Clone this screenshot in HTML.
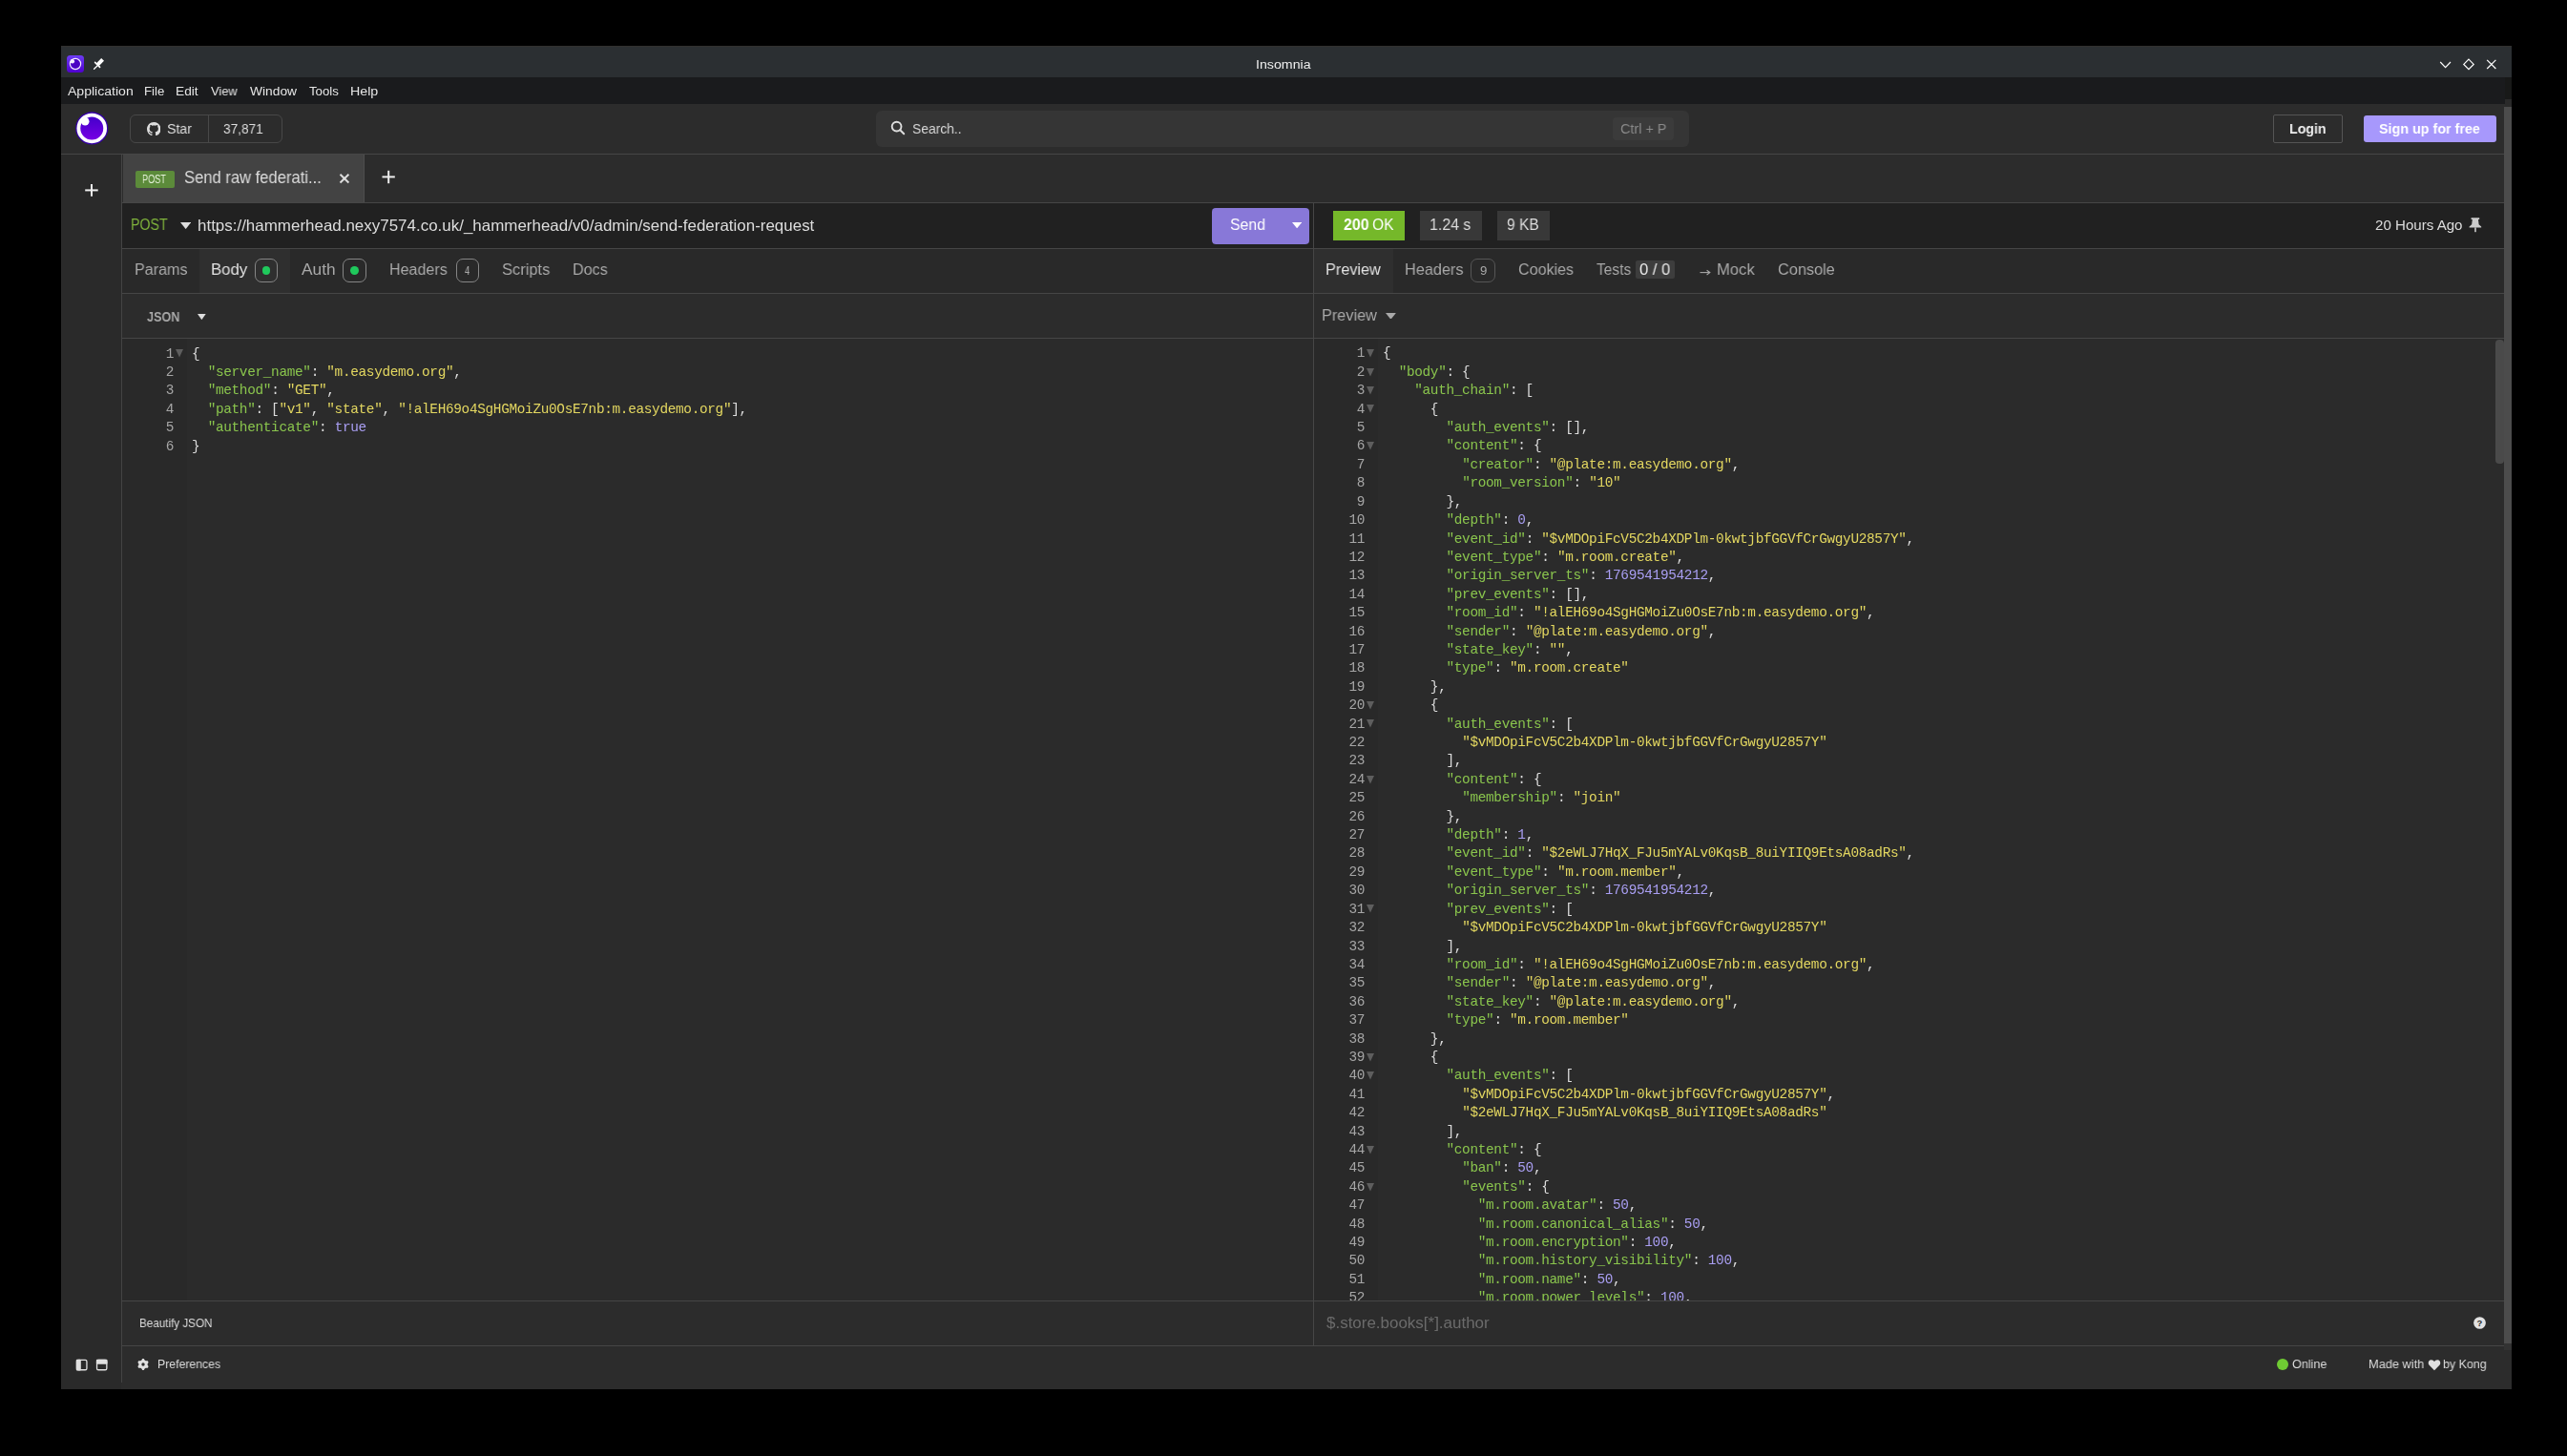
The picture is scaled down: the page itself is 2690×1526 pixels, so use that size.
<!DOCTYPE html><html><head><meta charset="utf-8"><style>html,body{margin:0;padding:0;background:#000;width:2690px;height:1526px;overflow:hidden;position:relative}.a{position:absolute}.t{white-space:pre;transform-origin:0 0;will-change:transform}.code{position:absolute;white-space:pre;font-family:"Liberation Mono",monospace;will-change:transform}.code i{font-style:normal}</style></head><body>
<div class="a" style="left:64px;top:48px;width:2568px;height:1408px;background:#2c2c2c;"></div>
<div class="a" style="left:64px;top:48px;width:2568px;height:33px;background:#2b2f32;"></div>
<div class="a" style="left:64px;top:48px;width:2568px;height:1px;background:#32302f;"></div>
<div class="a" style="left:64px;top:81px;width:2560.5px;height:28px;background:#1a1b1d;"></div>
<div class="a" style="left:2624.5px;top:81px;width:7.5px;height:23px;background:#181918;"></div>
<div class="a" style="left:2624.5px;top:104px;width:7.5px;height:8px;background:#2a2a2a;"></div>
<div class="a" style="left:2624px;top:112px;width:8px;height:1296px;background:#4c4c4c;"></div>
<div class="a" style="left:2624px;top:1408px;width:8px;height:7px;background:#333333;"></div>
<div class="a" style="left:64px;top:109px;width:2560px;height:52px;background:#2c2c2c;"></div>
<div class="a" style="left:64px;top:161px;width:2560px;height:1px;background:#464646;"></div>
<div class="a" style="left:64px;top:162px;width:63px;height:1294px;background:#2a2a2a;"></div>
<div class="a" style="left:127px;top:162px;width:1.5px;height:1287px;background:#444444;"></div>
<div class="a" style="left:128px;top:162px;width:2496px;height:50px;background:#2c2c2c;"></div>
<div class="a" style="left:129px;top:162px;width:252px;height:50px;background:#434343;"></div>
<div class="a" style="left:381px;top:162px;width:1px;height:50px;background:#4e4e4e;"></div>
<div class="a" style="left:128px;top:212px;width:2496px;height:1px;background:#464646;"></div>
<div class="a" style="left:128px;top:213px;width:2496px;height:47px;background:#212121;"></div>
<div class="a" style="left:128px;top:260px;width:2496px;height:1px;background:#464646;"></div>
<div class="a" style="left:128px;top:261px;width:2496px;height:46px;background:#292929;"></div>
<div class="a" style="left:209px;top:261px;width:94.7px;height:46px;background:#2f2f2f;"></div>
<div class="a" style="left:1377px;top:261px;width:83px;height:46px;background:#2f2f2f;"></div>
<div class="a" style="left:128px;top:307px;width:2496px;height:1px;background:#464646;"></div>
<div class="a" style="left:128px;top:308px;width:2496px;height:46px;background:#2c2c2c;"></div>
<div class="a" style="left:128px;top:354px;width:2496px;height:1px;background:#464646;"></div>
<div class="a" style="left:128px;top:355px;width:1248px;height:1008px;background:#2b2b2b;"></div>
<div class="a" style="left:128px;top:355px;width:67.6px;height:1008px;background:#292929;"></div>
<div class="a" style="left:1377px;top:355px;width:1247px;height:1008px;background:#2b2b2b;"></div>
<div class="a" style="left:1377px;top:355px;width:67.3px;height:1008px;background:#292929;"></div>
<div class="a" style="left:2615px;top:355.5px;width:8.7px;height:130.5px;background:#4a4a4a;border-radius:4px"></div>
<div class="a" style="left:128px;top:1363px;width:2496px;height:1px;background:#464646;"></div>
<div class="a" style="left:128px;top:1364px;width:2496px;height:46px;background:#2c2c2c;"></div>
<div class="a" style="left:128px;top:1410px;width:2496px;height:1px;background:#464646;"></div>
<div class="a" style="left:128px;top:1411px;width:2496px;height:45px;background:#2c2c2c;"></div>
<div class="a" style="left:1376px;top:213px;width:1px;height:1197px;background:#464646;"></div>
<div class="a" style="left:136px;top:120px;width:159.5px;height:30px;background:transparent;border:1px solid #484848;border-radius:6px;box-sizing:border-box"></div>
<div class="a" style="left:218px;top:120px;width:1px;height:30px;background:#484848;"></div>
<div class="a" style="left:918px;top:116px;width:852px;height:38px;background:#353535;border-radius:6px"></div>
<div class="a" style="left:1690px;top:122.8px;width:64px;height:23.9px;background:#3b3b3b;border-radius:4px"></div>
<div class="a" style="left:2382px;top:120px;width:72.6px;height:29.7px;background:transparent;border:1px solid #555;border-radius:2px;box-sizing:border-box"></div>
<div class="a" style="left:2477px;top:121px;width:139px;height:28.3px;background:#a798fc;border-radius:3px"></div>
<div class="a" style="left:141.7px;top:178.8px;width:41.4px;height:18.2px;background:#5c8b3a;border-radius:2px"></div>
<div class="a" style="left:1270px;top:217.8px;width:102px;height:38.2px;background:#8878d8;border-radius:4px"></div>
<div class="a" style="left:1396.8px;top:221px;width:75.2px;height:31px;background:#75b82a;"></div>
<div class="a" style="left:1488.1px;top:221px;width:64.7px;height:31px;background:#383838;"></div>
<div class="a" style="left:1569.1px;top:221px;width:54.6px;height:31px;background:#383838;"></div>
<div class="a" style="left:1714.2px;top:273.1px;width:40.5px;height:18.7px;background:#3d3d3d;border-radius:2px"></div>
<div class="a" style="left:267px;top:271.2px;width:23.8px;height:24.6px;background:transparent;border:1px solid #858585;border-radius:7px;box-sizing:border-box"></div>
<div class="a" style="left:358.9px;top:271.2px;width:24.8px;height:24.6px;background:transparent;border:1px solid #858585;border-radius:7px;box-sizing:border-box"></div>
<div class="a" style="left:478px;top:271.2px;width:24px;height:24.6px;background:transparent;border:1px solid #858585;border-radius:7px;box-sizing:border-box"></div>
<div class="a" style="left:1541.1px;top:271.2px;width:25.7px;height:24.6px;background:transparent;border:1px solid #565656;border-radius:7px;box-sizing:border-box"></div>
<div class="a" style="left:274.5px;top:279.20000000000005px;width:8.8px;height:8.8px;background:#1fc95c;border-radius:50%"></div>
<div class="a" style="left:366.9px;top:279.20000000000005px;width:8.8px;height:8.8px;background:#1fc95c;border-radius:50%"></div>
<svg class="a" style="left:70px;top:58px" width="18" height="18" viewBox="0 0 18 18"><defs><linearGradient id="g1" x1="0" y1="0" x2="0" y2="1"><stop offset="0" stop-color="#6d3cf5"/><stop offset="1" stop-color="#5000d0"/></linearGradient></defs><rect x="0" y="0" width="18" height="18" rx="3.5" fill="url(#g1)"/><circle cx="9" cy="9" r="5.6" fill="#4b00c4" stroke="#f4ecff" stroke-width="1.2"/><circle cx="5.8" cy="6.3" r="2.3" fill="#f4ecff"/></svg>
<svg class="a" style="left:96px;top:59px" width="15" height="15" viewBox="0 0 15 15"><polygon points="10.2,2.0 13.0,4.8 7.6,10.2 4.8,7.4" fill="#fff"/><line x1="3.6" y1="6.4" x2="8.6" y2="11.4" stroke="#fff" stroke-width="1.6" stroke-linecap="round"/><line x1="6" y1="10" x2="2.6" y2="13.2" stroke="#fff" stroke-width="1.3" stroke-linecap="round"/></svg>
<svg class="a" style="left:2554px;top:58px" width="70" height="20" viewBox="0 0 70 20"><polyline points="3.2,7 8.6,12.6 14,7" fill="none" stroke="#fff" stroke-width="1.2"/><polygon points="33,4.2 38.2,9.4 33,14.6 27.8,9.4" fill="none" stroke="#fff" stroke-width="1.2"/><line x1="52.2" y1="4.8" x2="61.4" y2="14" stroke="#fff" stroke-width="1.2"/><line x1="61.4" y1="4.8" x2="52.2" y2="14" stroke="#fff" stroke-width="1.2"/></svg>
<svg class="a" style="left:78.4px;top:116.2px" width="37" height="37" viewBox="0 0 37 37"><defs><linearGradient id="g2" x1="0" y1="0" x2="0" y2="1"><stop offset="0" stop-color="#4000c8"/><stop offset="1" stop-color="#7b00e6"/></linearGradient></defs><circle cx="18.25" cy="18.45" r="17.1" fill="#3600a8"/><circle cx="18.25" cy="18.45" r="13.9" fill="url(#g2)" stroke="#fff" stroke-width="3.8"/><circle cx="11.2" cy="11.2" r="4.3" fill="#fff"/></svg>
<svg class="a" style="left:153.5px;top:127.5px" width="14.5" height="14.5" viewBox="0 0 16 16"><path fill="#dddddd" d="M8 0C3.58 0 0 3.58 0 8c0 3.54 2.29 6.53 5.47 7.59.4.07.55-.17.55-.38 0-.19-.01-.82-.01-1.49-2.01.37-2.53-.49-2.69-.94-.09-.23-.48-.94-.82-1.13-.28-.15-.68-.52-.01-.53.63-.01 1.08.58 1.23.82.72 1.21 1.87.87 2.33.66.07-.52.28-.87.51-1.07-1.78-.2-3.64-.89-3.64-3.95 0-.87.31-1.59.82-2.15-.08-.2-.36-1.02.08-2.12 0 0 .67-.21 2.2.82.64-.18 1.32-.27 2-.27.68 0 1.36.09 2 .27 1.53-1.04 2.2-.82 2.2-.82.44 1.1.16 1.92.08 2.12.51.56.82 1.27.82 2.15 0 3.07-1.87 3.75-3.65 3.95.29.25.54.73.54 1.48 0 1.07-.01 1.93-.01 2.2 0 .21.15.46.55.38A8.013 8.013 0 0016 8c0-4.42-3.58-8-8-8z"/></svg>
<svg class="a" style="left:932px;top:125px" width="18" height="18" viewBox="0 0 18 18"><circle cx="7.6" cy="7.6" r="4.9" fill="none" stroke="#dddddd" stroke-width="1.9"/><line x1="11.2" y1="11.2" x2="15.2" y2="15.2" stroke="#dddddd" stroke-width="2" stroke-linecap="round"/></svg>
<svg class="a" style="left:87px;top:191px" width="18" height="18" viewBox="0 0 18 18"><line x1="9" y1="2" x2="9" y2="14.8" stroke="#eeeeee" stroke-width="2"/><line x1="2.2" y1="8.4" x2="15.7" y2="8.4" stroke="#eeeeee" stroke-width="2"/></svg>
<svg class="a" style="left:353px;top:180px" width="16" height="16" viewBox="0 0 16 16"><line x1="3.5" y1="2.7" x2="12.4" y2="11.5" stroke="#dddddd" stroke-width="2"/><line x1="12.4" y1="2.7" x2="3.5" y2="11.5" stroke="#dddddd" stroke-width="2"/></svg>
<svg class="a" style="left:398px;top:176px" width="18" height="18" viewBox="0 0 18 18"><line x1="9.2" y1="2.8" x2="9.2" y2="16.2" stroke="#eeeeee" stroke-width="2"/><line x1="2.5" y1="9.4" x2="15.8" y2="9.4" stroke="#eeeeee" stroke-width="2"/></svg>
<svg class="a" style="left:188.7px;top:232.8px" width="11.3" height="7.1" viewBox="0 0 11.3 7.1"><polygon points="0,0 11.3,0 5.65,7.1" fill="#dddddd"/></svg>
<svg class="a" style="left:207.1px;top:329px" width="8.7" height="6.2" viewBox="0 0 8.7 6.2"><polygon points="0,0 8.7,0 4.35,6.2" fill="#dddddd"/></svg>
<svg class="a" style="left:1353.7px;top:232.8px" width="10.3" height="6.3" viewBox="0 0 10.3 6.3"><polygon points="0,0 10.3,0 5.15,6.3" fill="#ffffff"/></svg>
<svg class="a" style="left:1451.8px;top:327.5px" width="10.9" height="6.8" viewBox="0 0 10.9 6.8"><polygon points="0,0 10.9,0 5.45,6.8" fill="#a9a9a9"/></svg>
<svg class="a" style="left:2586px;top:226px" width="16" height="19" viewBox="0 0 16 19"><path d="M3.6,2.2 H12.2 V4 H11 L11.6,9.2 L14.2,11.4 V12.6 H1.6 V11.4 L4.2,9.2 L4.8,4 H3.6 Z" fill="#cccccc"/><rect x="7.2" y="12.4" width="1.6" height="4.8" fill="#cccccc"/></svg>
<svg class="a" style="left:1780px;top:280px" width="14" height="10" viewBox="0 0 14 10"><line x1="1.5" y1="5.6" x2="11.5" y2="5.6" stroke="#a9a9a9" stroke-width="1.1"/><polyline points="8.6,3.2 11.8,5.6 8.6,8" fill="none" stroke="#a9a9a9" stroke-width="1.1"/></svg>
<svg class="a" style="left:2591px;top:1379px" width="15" height="15" viewBox="0 0 15 15"><circle cx="7.5" cy="7.5" r="6.35" fill="#e2e2e2"/><text x="7.5" y="11.3" text-anchor="middle" font-family="Liberation Sans" font-weight="700" font-size="9.5" fill="#2a2a2a">?</text></svg>
<svg class="a" style="left:78px;top:1423px" width="36" height="15" viewBox="0 0 36 15"><rect x="2.45" y="2.35" width="10.5" height="10.4" rx="1.6" fill="none" stroke="#e0e0e0" stroke-width="1.3"/><rect x="1.8" y="1.7" width="5" height="11.7" rx="1" fill="#e0e0e0"/><rect x="23.55" y="2.35" width="10.3" height="10.4" rx="1.6" fill="none" stroke="#e0e0e0" stroke-width="1.3"/><rect x="22.9" y="1.7" width="11.6" height="5" rx="1" fill="#e0e0e0"/></svg>
<svg class="a" style="left:143px;top:1423px" width="14" height="14" viewBox="0 0 14 14"><polygon points="7.00,1.00 7.78,1.05 8.37,1.88 8.76,2.75 9.30,3.02 9.80,3.35 10.75,3.25 11.76,3.35 12.20,4.00 12.54,4.70 12.12,5.63 11.56,6.40 11.60,7.00 11.56,7.60 12.12,8.37 12.54,9.30 12.20,10.00 11.76,10.65 10.75,10.75 9.80,10.65 9.30,10.98 8.76,11.25 8.37,12.12 7.78,12.95 7.00,13.00 6.22,12.95 5.63,12.12 5.24,11.25 4.70,10.98 4.20,10.65 3.25,10.75 2.24,10.65 1.80,10.00 1.46,9.30 1.88,8.37 2.44,7.60 2.40,7.00 2.44,6.40 1.88,5.63 1.46,4.70 1.80,4.00 2.24,3.35 3.25,3.25 4.20,3.35 4.70,3.02 5.24,2.75 5.63,1.88 6.22,1.05" fill="#e0e0e0"/><circle cx="7" cy="7" r="1.7" fill="#2c2c2c"/></svg>
<div class="a" style="left:2386.1px;top:1424.2px;width:11.9px;height:11.8px;background:#6fcb33;border-radius:50%"></div>
<svg class="a" style="left:2544px;top:1424px" width="14" height="13" viewBox="0 0 14 13"><path d="M7,12.2 L1.6,6.8 C-0.2,4.9 0.9,1.2 3.7,1.2 C5.3,1.2 6.3,2.2 7,3.1 C7.7,2.2 8.7,1.2 10.3,1.2 C13.1,1.2 14.2,4.9 12.4,6.8 Z" fill="#e0e0e0"/></svg>
<div class="a" style="left:0;top:355px;width:2690px;height:1008px;overflow:hidden">
<div class="code" style="left:200.5px;top:8.50px;font-size:14.4px;line-height:14.4px;letter-spacing:-0.324px;color:#dddddd">{</div>
<div class="code" style="left:122.4px;width:60px;text-align:right;top:8.50px;font-size:14.4px;line-height:14.4px;letter-spacing:-0.324px;color:#a6a6a6">1</div>
<svg class="a" style="left:183.8px;top:11.20px" width="8" height="9"><polygon points="0,0 8,0 4,8.6" fill="#5e5e5e"/></svg>
<div class="code" style="left:200.5px;top:27.91px;font-size:14.4px;line-height:14.4px;letter-spacing:-0.324px;color:#dddddd">  <i style="color:#8ac54d">&quot;server_name&quot;</i>: <i style="color:#e3d760">&quot;m.easydemo.org&quot;</i>,</div>
<div class="code" style="left:122.4px;width:60px;text-align:right;top:27.91px;font-size:14.4px;line-height:14.4px;letter-spacing:-0.324px;color:#a6a6a6">2</div>
<div class="code" style="left:200.5px;top:47.32px;font-size:14.4px;line-height:14.4px;letter-spacing:-0.324px;color:#dddddd">  <i style="color:#8ac54d">&quot;method&quot;</i>: <i style="color:#e3d760">&quot;GET&quot;</i>,</div>
<div class="code" style="left:122.4px;width:60px;text-align:right;top:47.32px;font-size:14.4px;line-height:14.4px;letter-spacing:-0.324px;color:#a6a6a6">3</div>
<div class="code" style="left:200.5px;top:66.73px;font-size:14.4px;line-height:14.4px;letter-spacing:-0.324px;color:#dddddd">  <i style="color:#8ac54d">&quot;path&quot;</i>: [<i style="color:#e3d760">&quot;v1&quot;</i>, <i style="color:#e3d760">&quot;state&quot;</i>, <i style="color:#e3d760">&quot;!alEH69o4SgHGMoiZu0OsE7nb:m.easydemo.org&quot;</i>],</div>
<div class="code" style="left:122.4px;width:60px;text-align:right;top:66.73px;font-size:14.4px;line-height:14.4px;letter-spacing:-0.324px;color:#a6a6a6">4</div>
<div class="code" style="left:200.5px;top:86.14px;font-size:14.4px;line-height:14.4px;letter-spacing:-0.324px;color:#dddddd">  <i style="color:#8ac54d">&quot;authenticate&quot;</i>: <i style="color:#a99ef2">true</i></div>
<div class="code" style="left:122.4px;width:60px;text-align:right;top:86.14px;font-size:14.4px;line-height:14.4px;letter-spacing:-0.324px;color:#a6a6a6">5</div>
<div class="code" style="left:200.5px;top:105.55px;font-size:14.4px;line-height:14.4px;letter-spacing:-0.324px;color:#dddddd">}</div>
<div class="code" style="left:122.4px;width:60px;text-align:right;top:105.55px;font-size:14.4px;line-height:14.4px;letter-spacing:-0.324px;color:#a6a6a6">6</div>
</div>
<div class="a" style="left:0;top:355px;width:2690px;height:1008px;overflow:hidden">
<div class="code" style="left:1448.6px;top:8.40px;font-size:14.4px;line-height:14.4px;letter-spacing:-0.324px;color:#dddddd">{</div>
<div class="code" style="left:1370.2px;width:60px;text-align:right;top:8.40px;font-size:14.4px;line-height:14.4px;letter-spacing:-0.324px;color:#a6a6a6">1</div>
<svg class="a" style="left:1431.8px;top:11.10px" width="8" height="9"><polygon points="0,0 8,0 4,8.6" fill="#5e5e5e"/></svg>
<div class="code" style="left:1448.6px;top:27.81px;font-size:14.4px;line-height:14.4px;letter-spacing:-0.324px;color:#dddddd">  <i style="color:#8ac54d">&quot;body&quot;</i>: {</div>
<div class="code" style="left:1370.2px;width:60px;text-align:right;top:27.81px;font-size:14.4px;line-height:14.4px;letter-spacing:-0.324px;color:#a6a6a6">2</div>
<svg class="a" style="left:1431.8px;top:30.51px" width="8" height="9"><polygon points="0,0 8,0 4,8.6" fill="#5e5e5e"/></svg>
<div class="code" style="left:1448.6px;top:47.22px;font-size:14.4px;line-height:14.4px;letter-spacing:-0.324px;color:#dddddd">    <i style="color:#8ac54d">&quot;auth_chain&quot;</i>: [</div>
<div class="code" style="left:1370.2px;width:60px;text-align:right;top:47.22px;font-size:14.4px;line-height:14.4px;letter-spacing:-0.324px;color:#a6a6a6">3</div>
<svg class="a" style="left:1431.8px;top:49.92px" width="8" height="9"><polygon points="0,0 8,0 4,8.6" fill="#5e5e5e"/></svg>
<div class="code" style="left:1448.6px;top:66.63px;font-size:14.4px;line-height:14.4px;letter-spacing:-0.324px;color:#dddddd">      {</div>
<div class="code" style="left:1370.2px;width:60px;text-align:right;top:66.63px;font-size:14.4px;line-height:14.4px;letter-spacing:-0.324px;color:#a6a6a6">4</div>
<svg class="a" style="left:1431.8px;top:69.33px" width="8" height="9"><polygon points="0,0 8,0 4,8.6" fill="#5e5e5e"/></svg>
<div class="code" style="left:1448.6px;top:86.04px;font-size:14.4px;line-height:14.4px;letter-spacing:-0.324px;color:#dddddd">        <i style="color:#8ac54d">&quot;auth_events&quot;</i>: [],</div>
<div class="code" style="left:1370.2px;width:60px;text-align:right;top:86.04px;font-size:14.4px;line-height:14.4px;letter-spacing:-0.324px;color:#a6a6a6">5</div>
<div class="code" style="left:1448.6px;top:105.45px;font-size:14.4px;line-height:14.4px;letter-spacing:-0.324px;color:#dddddd">        <i style="color:#8ac54d">&quot;content&quot;</i>: {</div>
<div class="code" style="left:1370.2px;width:60px;text-align:right;top:105.45px;font-size:14.4px;line-height:14.4px;letter-spacing:-0.324px;color:#a6a6a6">6</div>
<svg class="a" style="left:1431.8px;top:108.15px" width="8" height="9"><polygon points="0,0 8,0 4,8.6" fill="#5e5e5e"/></svg>
<div class="code" style="left:1448.6px;top:124.86px;font-size:14.4px;line-height:14.4px;letter-spacing:-0.324px;color:#dddddd">          <i style="color:#8ac54d">&quot;creator&quot;</i>: <i style="color:#e3d760">&quot;@plate:m.easydemo.org&quot;</i>,</div>
<div class="code" style="left:1370.2px;width:60px;text-align:right;top:124.86px;font-size:14.4px;line-height:14.4px;letter-spacing:-0.324px;color:#a6a6a6">7</div>
<div class="code" style="left:1448.6px;top:144.27px;font-size:14.4px;line-height:14.4px;letter-spacing:-0.324px;color:#dddddd">          <i style="color:#8ac54d">&quot;room_version&quot;</i>: <i style="color:#e3d760">&quot;10&quot;</i></div>
<div class="code" style="left:1370.2px;width:60px;text-align:right;top:144.27px;font-size:14.4px;line-height:14.4px;letter-spacing:-0.324px;color:#a6a6a6">8</div>
<div class="code" style="left:1448.6px;top:163.68px;font-size:14.4px;line-height:14.4px;letter-spacing:-0.324px;color:#dddddd">        },</div>
<div class="code" style="left:1370.2px;width:60px;text-align:right;top:163.68px;font-size:14.4px;line-height:14.4px;letter-spacing:-0.324px;color:#a6a6a6">9</div>
<div class="code" style="left:1448.6px;top:183.09px;font-size:14.4px;line-height:14.4px;letter-spacing:-0.324px;color:#dddddd">        <i style="color:#8ac54d">&quot;depth&quot;</i>: <i style="color:#a99ef2">0</i>,</div>
<div class="code" style="left:1370.2px;width:60px;text-align:right;top:183.09px;font-size:14.4px;line-height:14.4px;letter-spacing:-0.324px;color:#a6a6a6">10</div>
<div class="code" style="left:1448.6px;top:202.50px;font-size:14.4px;line-height:14.4px;letter-spacing:-0.324px;color:#dddddd">        <i style="color:#8ac54d">&quot;event_id&quot;</i>: <i style="color:#e3d760">&quot;$vMDOpiFcV5C2b4XDPlm-0kwtjbfGGVfCrGwgyU2857Y&quot;</i>,</div>
<div class="code" style="left:1370.2px;width:60px;text-align:right;top:202.50px;font-size:14.4px;line-height:14.4px;letter-spacing:-0.324px;color:#a6a6a6">11</div>
<div class="code" style="left:1448.6px;top:221.91px;font-size:14.4px;line-height:14.4px;letter-spacing:-0.324px;color:#dddddd">        <i style="color:#8ac54d">&quot;event_type&quot;</i>: <i style="color:#e3d760">&quot;m.room.create&quot;</i>,</div>
<div class="code" style="left:1370.2px;width:60px;text-align:right;top:221.91px;font-size:14.4px;line-height:14.4px;letter-spacing:-0.324px;color:#a6a6a6">12</div>
<div class="code" style="left:1448.6px;top:241.32px;font-size:14.4px;line-height:14.4px;letter-spacing:-0.324px;color:#dddddd">        <i style="color:#8ac54d">&quot;origin_server_ts&quot;</i>: <i style="color:#a99ef2">1769541954212</i>,</div>
<div class="code" style="left:1370.2px;width:60px;text-align:right;top:241.32px;font-size:14.4px;line-height:14.4px;letter-spacing:-0.324px;color:#a6a6a6">13</div>
<div class="code" style="left:1448.6px;top:260.73px;font-size:14.4px;line-height:14.4px;letter-spacing:-0.324px;color:#dddddd">        <i style="color:#8ac54d">&quot;prev_events&quot;</i>: [],</div>
<div class="code" style="left:1370.2px;width:60px;text-align:right;top:260.73px;font-size:14.4px;line-height:14.4px;letter-spacing:-0.324px;color:#a6a6a6">14</div>
<div class="code" style="left:1448.6px;top:280.14px;font-size:14.4px;line-height:14.4px;letter-spacing:-0.324px;color:#dddddd">        <i style="color:#8ac54d">&quot;room_id&quot;</i>: <i style="color:#e3d760">&quot;!alEH69o4SgHGMoiZu0OsE7nb:m.easydemo.org&quot;</i>,</div>
<div class="code" style="left:1370.2px;width:60px;text-align:right;top:280.14px;font-size:14.4px;line-height:14.4px;letter-spacing:-0.324px;color:#a6a6a6">15</div>
<div class="code" style="left:1448.6px;top:299.55px;font-size:14.4px;line-height:14.4px;letter-spacing:-0.324px;color:#dddddd">        <i style="color:#8ac54d">&quot;sender&quot;</i>: <i style="color:#e3d760">&quot;@plate:m.easydemo.org&quot;</i>,</div>
<div class="code" style="left:1370.2px;width:60px;text-align:right;top:299.55px;font-size:14.4px;line-height:14.4px;letter-spacing:-0.324px;color:#a6a6a6">16</div>
<div class="code" style="left:1448.6px;top:318.96px;font-size:14.4px;line-height:14.4px;letter-spacing:-0.324px;color:#dddddd">        <i style="color:#8ac54d">&quot;state_key&quot;</i>: <i style="color:#e3d760">&quot;&quot;</i>,</div>
<div class="code" style="left:1370.2px;width:60px;text-align:right;top:318.96px;font-size:14.4px;line-height:14.4px;letter-spacing:-0.324px;color:#a6a6a6">17</div>
<div class="code" style="left:1448.6px;top:338.37px;font-size:14.4px;line-height:14.4px;letter-spacing:-0.324px;color:#dddddd">        <i style="color:#8ac54d">&quot;type&quot;</i>: <i style="color:#e3d760">&quot;m.room.create&quot;</i></div>
<div class="code" style="left:1370.2px;width:60px;text-align:right;top:338.37px;font-size:14.4px;line-height:14.4px;letter-spacing:-0.324px;color:#a6a6a6">18</div>
<div class="code" style="left:1448.6px;top:357.78px;font-size:14.4px;line-height:14.4px;letter-spacing:-0.324px;color:#dddddd">      },</div>
<div class="code" style="left:1370.2px;width:60px;text-align:right;top:357.78px;font-size:14.4px;line-height:14.4px;letter-spacing:-0.324px;color:#a6a6a6">19</div>
<div class="code" style="left:1448.6px;top:377.19px;font-size:14.4px;line-height:14.4px;letter-spacing:-0.324px;color:#dddddd">      {</div>
<div class="code" style="left:1370.2px;width:60px;text-align:right;top:377.19px;font-size:14.4px;line-height:14.4px;letter-spacing:-0.324px;color:#a6a6a6">20</div>
<svg class="a" style="left:1431.8px;top:379.89px" width="8" height="9"><polygon points="0,0 8,0 4,8.6" fill="#5e5e5e"/></svg>
<div class="code" style="left:1448.6px;top:396.60px;font-size:14.4px;line-height:14.4px;letter-spacing:-0.324px;color:#dddddd">        <i style="color:#8ac54d">&quot;auth_events&quot;</i>: [</div>
<div class="code" style="left:1370.2px;width:60px;text-align:right;top:396.60px;font-size:14.4px;line-height:14.4px;letter-spacing:-0.324px;color:#a6a6a6">21</div>
<svg class="a" style="left:1431.8px;top:399.30px" width="8" height="9"><polygon points="0,0 8,0 4,8.6" fill="#5e5e5e"/></svg>
<div class="code" style="left:1448.6px;top:416.01px;font-size:14.4px;line-height:14.4px;letter-spacing:-0.324px;color:#dddddd">          <i style="color:#e3d760">&quot;$vMDOpiFcV5C2b4XDPlm-0kwtjbfGGVfCrGwgyU2857Y&quot;</i></div>
<div class="code" style="left:1370.2px;width:60px;text-align:right;top:416.01px;font-size:14.4px;line-height:14.4px;letter-spacing:-0.324px;color:#a6a6a6">22</div>
<div class="code" style="left:1448.6px;top:435.42px;font-size:14.4px;line-height:14.4px;letter-spacing:-0.324px;color:#dddddd">        ],</div>
<div class="code" style="left:1370.2px;width:60px;text-align:right;top:435.42px;font-size:14.4px;line-height:14.4px;letter-spacing:-0.324px;color:#a6a6a6">23</div>
<div class="code" style="left:1448.6px;top:454.83px;font-size:14.4px;line-height:14.4px;letter-spacing:-0.324px;color:#dddddd">        <i style="color:#8ac54d">&quot;content&quot;</i>: {</div>
<div class="code" style="left:1370.2px;width:60px;text-align:right;top:454.83px;font-size:14.4px;line-height:14.4px;letter-spacing:-0.324px;color:#a6a6a6">24</div>
<svg class="a" style="left:1431.8px;top:457.53px" width="8" height="9"><polygon points="0,0 8,0 4,8.6" fill="#5e5e5e"/></svg>
<div class="code" style="left:1448.6px;top:474.24px;font-size:14.4px;line-height:14.4px;letter-spacing:-0.324px;color:#dddddd">          <i style="color:#8ac54d">&quot;membership&quot;</i>: <i style="color:#e3d760">&quot;join&quot;</i></div>
<div class="code" style="left:1370.2px;width:60px;text-align:right;top:474.24px;font-size:14.4px;line-height:14.4px;letter-spacing:-0.324px;color:#a6a6a6">25</div>
<div class="code" style="left:1448.6px;top:493.65px;font-size:14.4px;line-height:14.4px;letter-spacing:-0.324px;color:#dddddd">        },</div>
<div class="code" style="left:1370.2px;width:60px;text-align:right;top:493.65px;font-size:14.4px;line-height:14.4px;letter-spacing:-0.324px;color:#a6a6a6">26</div>
<div class="code" style="left:1448.6px;top:513.06px;font-size:14.4px;line-height:14.4px;letter-spacing:-0.324px;color:#dddddd">        <i style="color:#8ac54d">&quot;depth&quot;</i>: <i style="color:#a99ef2">1</i>,</div>
<div class="code" style="left:1370.2px;width:60px;text-align:right;top:513.06px;font-size:14.4px;line-height:14.4px;letter-spacing:-0.324px;color:#a6a6a6">27</div>
<div class="code" style="left:1448.6px;top:532.47px;font-size:14.4px;line-height:14.4px;letter-spacing:-0.324px;color:#dddddd">        <i style="color:#8ac54d">&quot;event_id&quot;</i>: <i style="color:#e3d760">&quot;$2eWLJ7HqX_FJu5mYALv0KqsB_8uiYIIQ9EtsA08adRs&quot;</i>,</div>
<div class="code" style="left:1370.2px;width:60px;text-align:right;top:532.47px;font-size:14.4px;line-height:14.4px;letter-spacing:-0.324px;color:#a6a6a6">28</div>
<div class="code" style="left:1448.6px;top:551.88px;font-size:14.4px;line-height:14.4px;letter-spacing:-0.324px;color:#dddddd">        <i style="color:#8ac54d">&quot;event_type&quot;</i>: <i style="color:#e3d760">&quot;m.room.member&quot;</i>,</div>
<div class="code" style="left:1370.2px;width:60px;text-align:right;top:551.88px;font-size:14.4px;line-height:14.4px;letter-spacing:-0.324px;color:#a6a6a6">29</div>
<div class="code" style="left:1448.6px;top:571.29px;font-size:14.4px;line-height:14.4px;letter-spacing:-0.324px;color:#dddddd">        <i style="color:#8ac54d">&quot;origin_server_ts&quot;</i>: <i style="color:#a99ef2">1769541954212</i>,</div>
<div class="code" style="left:1370.2px;width:60px;text-align:right;top:571.29px;font-size:14.4px;line-height:14.4px;letter-spacing:-0.324px;color:#a6a6a6">30</div>
<div class="code" style="left:1448.6px;top:590.70px;font-size:14.4px;line-height:14.4px;letter-spacing:-0.324px;color:#dddddd">        <i style="color:#8ac54d">&quot;prev_events&quot;</i>: [</div>
<div class="code" style="left:1370.2px;width:60px;text-align:right;top:590.70px;font-size:14.4px;line-height:14.4px;letter-spacing:-0.324px;color:#a6a6a6">31</div>
<svg class="a" style="left:1431.8px;top:593.40px" width="8" height="9"><polygon points="0,0 8,0 4,8.6" fill="#5e5e5e"/></svg>
<div class="code" style="left:1448.6px;top:610.11px;font-size:14.4px;line-height:14.4px;letter-spacing:-0.324px;color:#dddddd">          <i style="color:#e3d760">&quot;$vMDOpiFcV5C2b4XDPlm-0kwtjbfGGVfCrGwgyU2857Y&quot;</i></div>
<div class="code" style="left:1370.2px;width:60px;text-align:right;top:610.11px;font-size:14.4px;line-height:14.4px;letter-spacing:-0.324px;color:#a6a6a6">32</div>
<div class="code" style="left:1448.6px;top:629.52px;font-size:14.4px;line-height:14.4px;letter-spacing:-0.324px;color:#dddddd">        ],</div>
<div class="code" style="left:1370.2px;width:60px;text-align:right;top:629.52px;font-size:14.4px;line-height:14.4px;letter-spacing:-0.324px;color:#a6a6a6">33</div>
<div class="code" style="left:1448.6px;top:648.93px;font-size:14.4px;line-height:14.4px;letter-spacing:-0.324px;color:#dddddd">        <i style="color:#8ac54d">&quot;room_id&quot;</i>: <i style="color:#e3d760">&quot;!alEH69o4SgHGMoiZu0OsE7nb:m.easydemo.org&quot;</i>,</div>
<div class="code" style="left:1370.2px;width:60px;text-align:right;top:648.93px;font-size:14.4px;line-height:14.4px;letter-spacing:-0.324px;color:#a6a6a6">34</div>
<div class="code" style="left:1448.6px;top:668.34px;font-size:14.4px;line-height:14.4px;letter-spacing:-0.324px;color:#dddddd">        <i style="color:#8ac54d">&quot;sender&quot;</i>: <i style="color:#e3d760">&quot;@plate:m.easydemo.org&quot;</i>,</div>
<div class="code" style="left:1370.2px;width:60px;text-align:right;top:668.34px;font-size:14.4px;line-height:14.4px;letter-spacing:-0.324px;color:#a6a6a6">35</div>
<div class="code" style="left:1448.6px;top:687.75px;font-size:14.4px;line-height:14.4px;letter-spacing:-0.324px;color:#dddddd">        <i style="color:#8ac54d">&quot;state_key&quot;</i>: <i style="color:#e3d760">&quot;@plate:m.easydemo.org&quot;</i>,</div>
<div class="code" style="left:1370.2px;width:60px;text-align:right;top:687.75px;font-size:14.4px;line-height:14.4px;letter-spacing:-0.324px;color:#a6a6a6">36</div>
<div class="code" style="left:1448.6px;top:707.16px;font-size:14.4px;line-height:14.4px;letter-spacing:-0.324px;color:#dddddd">        <i style="color:#8ac54d">&quot;type&quot;</i>: <i style="color:#e3d760">&quot;m.room.member&quot;</i></div>
<div class="code" style="left:1370.2px;width:60px;text-align:right;top:707.16px;font-size:14.4px;line-height:14.4px;letter-spacing:-0.324px;color:#a6a6a6">37</div>
<div class="code" style="left:1448.6px;top:726.57px;font-size:14.4px;line-height:14.4px;letter-spacing:-0.324px;color:#dddddd">      },</div>
<div class="code" style="left:1370.2px;width:60px;text-align:right;top:726.57px;font-size:14.4px;line-height:14.4px;letter-spacing:-0.324px;color:#a6a6a6">38</div>
<div class="code" style="left:1448.6px;top:745.98px;font-size:14.4px;line-height:14.4px;letter-spacing:-0.324px;color:#dddddd">      {</div>
<div class="code" style="left:1370.2px;width:60px;text-align:right;top:745.98px;font-size:14.4px;line-height:14.4px;letter-spacing:-0.324px;color:#a6a6a6">39</div>
<svg class="a" style="left:1431.8px;top:748.68px" width="8" height="9"><polygon points="0,0 8,0 4,8.6" fill="#5e5e5e"/></svg>
<div class="code" style="left:1448.6px;top:765.39px;font-size:14.4px;line-height:14.4px;letter-spacing:-0.324px;color:#dddddd">        <i style="color:#8ac54d">&quot;auth_events&quot;</i>: [</div>
<div class="code" style="left:1370.2px;width:60px;text-align:right;top:765.39px;font-size:14.4px;line-height:14.4px;letter-spacing:-0.324px;color:#a6a6a6">40</div>
<svg class="a" style="left:1431.8px;top:768.09px" width="8" height="9"><polygon points="0,0 8,0 4,8.6" fill="#5e5e5e"/></svg>
<div class="code" style="left:1448.6px;top:784.80px;font-size:14.4px;line-height:14.4px;letter-spacing:-0.324px;color:#dddddd">          <i style="color:#e3d760">&quot;$vMDOpiFcV5C2b4XDPlm-0kwtjbfGGVfCrGwgyU2857Y&quot;</i>,</div>
<div class="code" style="left:1370.2px;width:60px;text-align:right;top:784.80px;font-size:14.4px;line-height:14.4px;letter-spacing:-0.324px;color:#a6a6a6">41</div>
<div class="code" style="left:1448.6px;top:804.21px;font-size:14.4px;line-height:14.4px;letter-spacing:-0.324px;color:#dddddd">          <i style="color:#e3d760">&quot;$2eWLJ7HqX_FJu5mYALv0KqsB_8uiYIIQ9EtsA08adRs&quot;</i></div>
<div class="code" style="left:1370.2px;width:60px;text-align:right;top:804.21px;font-size:14.4px;line-height:14.4px;letter-spacing:-0.324px;color:#a6a6a6">42</div>
<div class="code" style="left:1448.6px;top:823.62px;font-size:14.4px;line-height:14.4px;letter-spacing:-0.324px;color:#dddddd">        ],</div>
<div class="code" style="left:1370.2px;width:60px;text-align:right;top:823.62px;font-size:14.4px;line-height:14.4px;letter-spacing:-0.324px;color:#a6a6a6">43</div>
<div class="code" style="left:1448.6px;top:843.03px;font-size:14.4px;line-height:14.4px;letter-spacing:-0.324px;color:#dddddd">        <i style="color:#8ac54d">&quot;content&quot;</i>: {</div>
<div class="code" style="left:1370.2px;width:60px;text-align:right;top:843.03px;font-size:14.4px;line-height:14.4px;letter-spacing:-0.324px;color:#a6a6a6">44</div>
<svg class="a" style="left:1431.8px;top:845.73px" width="8" height="9"><polygon points="0,0 8,0 4,8.6" fill="#5e5e5e"/></svg>
<div class="code" style="left:1448.6px;top:862.44px;font-size:14.4px;line-height:14.4px;letter-spacing:-0.324px;color:#dddddd">          <i style="color:#8ac54d">&quot;ban&quot;</i>: <i style="color:#a99ef2">50</i>,</div>
<div class="code" style="left:1370.2px;width:60px;text-align:right;top:862.44px;font-size:14.4px;line-height:14.4px;letter-spacing:-0.324px;color:#a6a6a6">45</div>
<div class="code" style="left:1448.6px;top:881.85px;font-size:14.4px;line-height:14.4px;letter-spacing:-0.324px;color:#dddddd">          <i style="color:#8ac54d">&quot;events&quot;</i>: {</div>
<div class="code" style="left:1370.2px;width:60px;text-align:right;top:881.85px;font-size:14.4px;line-height:14.4px;letter-spacing:-0.324px;color:#a6a6a6">46</div>
<svg class="a" style="left:1431.8px;top:884.55px" width="8" height="9"><polygon points="0,0 8,0 4,8.6" fill="#5e5e5e"/></svg>
<div class="code" style="left:1448.6px;top:901.26px;font-size:14.4px;line-height:14.4px;letter-spacing:-0.324px;color:#dddddd">            <i style="color:#8ac54d">&quot;m.room.avatar&quot;</i>: <i style="color:#a99ef2">50</i>,</div>
<div class="code" style="left:1370.2px;width:60px;text-align:right;top:901.26px;font-size:14.4px;line-height:14.4px;letter-spacing:-0.324px;color:#a6a6a6">47</div>
<div class="code" style="left:1448.6px;top:920.67px;font-size:14.4px;line-height:14.4px;letter-spacing:-0.324px;color:#dddddd">            <i style="color:#8ac54d">&quot;m.room.canonical_alias&quot;</i>: <i style="color:#a99ef2">50</i>,</div>
<div class="code" style="left:1370.2px;width:60px;text-align:right;top:920.67px;font-size:14.4px;line-height:14.4px;letter-spacing:-0.324px;color:#a6a6a6">48</div>
<div class="code" style="left:1448.6px;top:940.08px;font-size:14.4px;line-height:14.4px;letter-spacing:-0.324px;color:#dddddd">            <i style="color:#8ac54d">&quot;m.room.encryption&quot;</i>: <i style="color:#a99ef2">100</i>,</div>
<div class="code" style="left:1370.2px;width:60px;text-align:right;top:940.08px;font-size:14.4px;line-height:14.4px;letter-spacing:-0.324px;color:#a6a6a6">49</div>
<div class="code" style="left:1448.6px;top:959.49px;font-size:14.4px;line-height:14.4px;letter-spacing:-0.324px;color:#dddddd">            <i style="color:#8ac54d">&quot;m.room.history_visibility&quot;</i>: <i style="color:#a99ef2">100</i>,</div>
<div class="code" style="left:1370.2px;width:60px;text-align:right;top:959.49px;font-size:14.4px;line-height:14.4px;letter-spacing:-0.324px;color:#a6a6a6">50</div>
<div class="code" style="left:1448.6px;top:978.90px;font-size:14.4px;line-height:14.4px;letter-spacing:-0.324px;color:#dddddd">            <i style="color:#8ac54d">&quot;m.room.name&quot;</i>: <i style="color:#a99ef2">50</i>,</div>
<div class="code" style="left:1370.2px;width:60px;text-align:right;top:978.90px;font-size:14.4px;line-height:14.4px;letter-spacing:-0.324px;color:#a6a6a6">51</div>
<div class="code" style="left:1448.6px;top:998.31px;font-size:14.4px;line-height:14.4px;letter-spacing:-0.324px;color:#dddddd">            <i style="color:#8ac54d">&quot;m.room.power_levels&quot;</i>: <i style="color:#a99ef2">100</i>,</div>
<div class="code" style="left:1370.2px;width:60px;text-align:right;top:998.31px;font-size:14.4px;line-height:14.4px;letter-spacing:-0.324px;color:#a6a6a6">52</div>
</div>
<div class="a t" style="left:1315.51px;top:60.90px;font:400 13.08px/13.08px 'Liberation Sans';color:#eeeeee;transform:scaleX(1.0865)">Insomnia</div>
<div class="a t" style="left:71.20px;top:88.60px;font:400 13.23px/13.23px 'Liberation Sans';color:#e6e6e6;transform:scaleX(1.0625)">Application</div>
<div class="a t" style="left:151.31px;top:88.60px;font:400 13.23px/13.23px 'Liberation Sans';color:#e6e6e6;transform:scaleX(0.9950)">File</div>
<div class="a t" style="left:184.16px;top:88.60px;font:400 13.23px/13.23px 'Liberation Sans';color:#e6e6e6;transform:scaleX(1.0364)">Edit</div>
<div class="a t" style="left:221.00px;top:88.60px;font:400 13.23px/13.23px 'Liberation Sans';color:#e6e6e6;transform:scaleX(0.9759)">View</div>
<div class="a t" style="left:262.00px;top:88.60px;font:400 13.23px/13.23px 'Liberation Sans';color:#e6e6e6;transform:scaleX(1.0426)">Window</div>
<div class="a t" style="left:324.40px;top:88.60px;font:400 13.23px/13.23px 'Liberation Sans';color:#e6e6e6;transform:scaleX(0.9935)">Tools</div>
<div class="a t" style="left:366.82px;top:88.60px;font:400 13.23px/13.23px 'Liberation Sans';color:#e6e6e6;transform:scaleX(1.0769)">Help</div>
<div class="a t" style="left:174.73px;top:128.30px;font:400 14.68px/14.68px 'Liberation Sans';color:#dddddd;transform:scaleX(0.9654)">Star</div>
<div class="a t" style="left:234.37px;top:128.30px;font:400 14.68px/14.68px 'Liberation Sans';color:#dddddd;transform:scaleX(0.9295)">37,871</div>
<div class="a t" style="left:956.39px;top:127.30px;font:400 15.26px/15.26px 'Liberation Sans';color:#d8d8d8;transform:scaleX(0.9091)">Search..</div>
<div class="a t" style="left:1697.55px;top:127.30px;font:400 15.26px/15.26px 'Liberation Sans';color:#8a8a8a;transform:scaleX(0.9460)">Ctrl + P</div>
<div class="a t" style="left:2399.08px;top:127.00px;font:700 15.41px/15.41px 'Liberation Sans';color:#eeeeee;transform:scaleX(0.9200)">Login</div>
<div class="a t" style="left:2493.00px;top:127.00px;font:700 15.41px/15.41px 'Liberation Sans';color:#ffffff;transform:scaleX(0.9298)">Sign up for free</div>
<div class="a t" style="left:149.46px;top:181.50px;font:400 12.35px/12.35px 'Liberation Sans';color:#e6f2da;transform:scaleX(0.7424)">POST</div>
<div class="a t" style="left:192.65px;top:178.20px;font:400 17.44px/17.44px 'Liberation Sans';color:#dddddd;transform:scaleX(0.9510)">Send raw federati...</div>
<div class="a t" style="left:137.34px;top:226.60px;font:400 16.42px/16.42px 'Liberation Sans';color:#80b43c;transform:scaleX(0.8614)">POST</div>
<div class="a t" style="left:206.66px;top:227.90px;font:400 16.28px/16.28px 'Liberation Sans';color:#dddddd;transform:scaleX(1.0420)">https://hammerhead.nexy7574.co.uk/_hammerhead/v0/admin/send-federation-request</div>
<div class="a t" style="left:141.47px;top:274.20px;font:400 17.3px/17.3px 'Liberation Sans';color:#a9a9a9;transform:scaleX(0.9310)">Params</div>
<div class="a t" style="left:221.03px;top:274.20px;font:400 17.3px/17.3px 'Liberation Sans';color:#e2e2e2;transform:scaleX(0.9684)">Body</div>
<div class="a t" style="left:315.70px;top:274.20px;font:400 17.3px/17.3px 'Liberation Sans';color:#a9a9a9;transform:scaleX(1.0000)">Auth</div>
<div class="a t" style="left:408.37px;top:274.20px;font:400 17.3px/17.3px 'Liberation Sans';color:#a9a9a9;transform:scaleX(0.9297)">Headers</div>
<div class="a t" style="left:525.75px;top:274.20px;font:400 17.3px/17.3px 'Liberation Sans';color:#a9a9a9;transform:scaleX(0.9519)">Scripts</div>
<div class="a t" style="left:600.07px;top:274.20px;font:400 17.3px/17.3px 'Liberation Sans';color:#a9a9a9;transform:scaleX(0.9342)">Docs</div>
<div class="a t" style="left:487.30px;top:277.60px;font:400 12.21px/12.21px 'Liberation Sans';color:#a9a9a9;transform:scaleX(0.7714)">4</div>
<div class="a t" style="left:154.00px;top:324.50px;font:700 14.39px/14.39px 'Liberation Sans';color:#a9a9a9;transform:scaleX(0.8789)">JSON</div>
<div class="a t" style="left:1288.97px;top:227.30px;font:400 17.01px/17.01px 'Liberation Sans';color:#ffffff;transform:scaleX(0.9316)">Send</div>
<div class="a t" style="left:1407.70px;top:227.30px;font:700 17.01px/17.01px 'Liberation Sans';color:#ffffff;transform:scaleX(0.9357)">200</div>
<div class="a t" style="left:1438.38px;top:227.30px;font:400 17.01px/17.01px 'Liberation Sans';color:#ffffff;transform:scaleX(0.9174)">OK</div>
<div class="a t" style="left:1498.36px;top:227.30px;font:400 17.01px/17.01px 'Liberation Sans';color:#dddddd;transform:scaleX(0.9356)">1.24 s</div>
<div class="a t" style="left:1579.39px;top:227.30px;font:400 17.01px/17.01px 'Liberation Sans';color:#dddddd;transform:scaleX(0.9143)">9 KB</div>
<div class="a t" style="left:2488.56px;top:228.90px;font:400 14.53px/14.53px 'Liberation Sans';color:#dddddd;transform:scaleX(1.0402)">20 Hours Ago</div>
<div class="a t" style="left:1389.25px;top:274.00px;font:400 17.15px/17.15px 'Liberation Sans';color:#e2e2e2;transform:scaleX(0.9483)">Preview</div>
<div class="a t" style="left:1471.65px;top:274.00px;font:400 17.15px/17.15px 'Liberation Sans';color:#a9a9a9;transform:scaleX(0.9492)">Headers</div>
<div class="a t" style="left:1590.66px;top:274.00px;font:400 17.15px/17.15px 'Liberation Sans';color:#a9a9a9;transform:scaleX(0.9383)">Cookies</div>
<div class="a t" style="left:1673.00px;top:274.00px;font:400 17.15px/17.15px 'Liberation Sans';color:#a9a9a9;transform:scaleX(0.9050)">Tests</div>
<div class="a t" style="left:1799.23px;top:274.00px;font:400 17.15px/17.15px 'Liberation Sans';color:#a9a9a9;transform:scaleX(0.9675)">Mock</div>
<div class="a t" style="left:1863.45px;top:274.00px;font:400 17.15px/17.15px 'Liberation Sans';color:#a9a9a9;transform:scaleX(0.9508)">Console</div>
<div class="a t" style="left:1550.70px;top:277.60px;font:400 12.21px/12.21px 'Liberation Sans';color:#a9a9a9;transform:scaleX(1.0833)">9</div>
<div class="a t" style="left:1717.90px;top:275.00px;font:400 16.86px/16.86px 'Liberation Sans';color:#eeeeee;transform:scaleX(0.9818)">0 / 0</div>
<div class="a t" style="left:1385.34px;top:323.30px;font:400 16.86px/16.86px 'Liberation Sans';color:#a9a9a9;transform:scaleX(0.9644)">Preview</div>
<div class="a t" style="left:145.59px;top:1380.90px;font:400 12.79px/12.79px 'Liberation Sans';color:#dddddd;transform:scaleX(0.9122)">Beautify JSON</div>
<div class="a t" style="left:164.51px;top:1423.90px;font:400 12.35px/12.35px 'Liberation Sans';color:#dddddd;transform:scaleX(0.9923)">Preferences</div>
<div class="a t" style="left:1390.40px;top:1378.00px;font:400 16.42px/16.42px 'Liberation Sans';color:#6b6b6b;transform:scaleX(1.0339)">$.store.books[*].author</div>
<div class="a t" style="left:2402.30px;top:1423.10px;font:400 13.08px/13.08px 'Liberation Sans';color:#dddddd;transform:scaleX(0.9622)">Online</div>
<div class="a t" style="left:2482.42px;top:1423.10px;font:400 13.08px/13.08px 'Liberation Sans';color:#dddddd;transform:scaleX(0.9776)">Made with</div>
<div class="a t" style="left:2560.35px;top:1423.10px;font:400 13.08px/13.08px 'Liberation Sans';color:#dddddd;transform:scaleX(0.9500)">by Kong</div>
</body></html>
